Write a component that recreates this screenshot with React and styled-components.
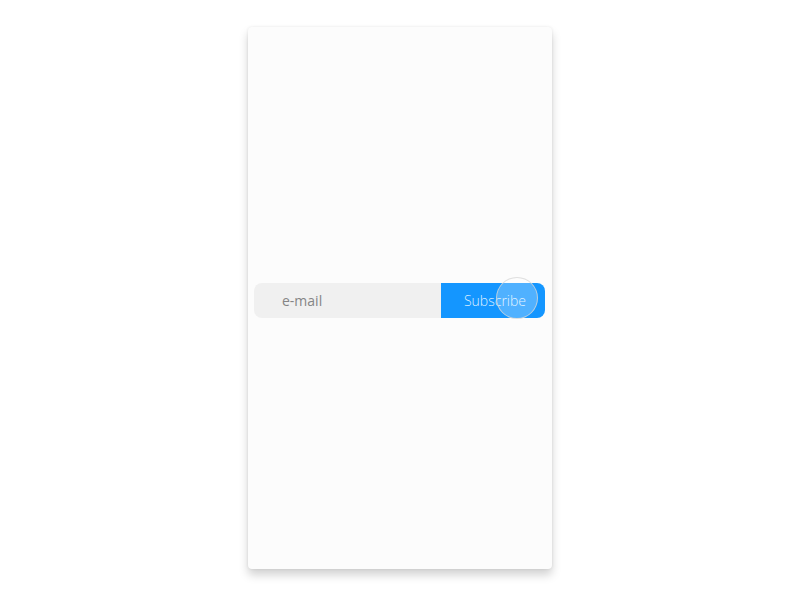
import React from "react";
import styled, { createGlobalStyle } from "styled-components";

const GlobalStyle = createGlobalStyle`
  html, body {
    margin: 0;
    padding: 0;
    background: #ffffff;
    font-family: "Open Sans", "Noto Sans", sans-serif;
  }
`;

const Page = styled.div`
  width: 800px;
  height: 600px;
  display: flex;
  justify-content: center;
  align-items: flex-start;
  padding-top: 27px;
  box-sizing: border-box;
`;

const Card = styled.div`
  width: 304px;
  height: 542px;
  background: #fcfcfc;
  border-radius: 4px;
  box-shadow: 0 6px 10px rgba(0, 0, 0, 0.18), 0 0 3px rgba(0, 0, 0, 0.08);
  display: flex;
  align-items: center;
  padding: 4px 7px 0 6px;
  box-sizing: border-box;
`;

const Form = styled.form`
  display: flex;
  width: 100%;
  height: 35px;
  margin: 0;
`;

const Email = styled.input`
  flex: 1;
  min-width: 0;
  border: none;
  outline: none;
  background: #f0f0f0;
  border-radius: 8px 0 0 8px;
  padding: 0 0 0 28px;
  font-family: "Open Sans", sans-serif;
  font-size: 14px;
  font-weight: 400;
  color: #777;
  &::placeholder {
    color: #858585;
  }
`;

const Button = styled.button`
  position: relative;
  width: 104px;
  border: none;
  background: #1496ff;
  border-radius: 0 8px 8px 0;
  color: #dcefff;
  font-family: "Open Sans", sans-serif;
  font-size: 14px;
  font-weight: 300;
  padding: 0 0 0 4px;
  cursor: pointer;
`;

const Ripple = styled.span`
  position: absolute;
  left: 55px;
  top: -6px;
  width: 42px;
  height: 42px;
  border-radius: 50%;
  background: rgba(255, 255, 255, 0.26);
  border: 1px solid rgba(215, 215, 215, 0.8);
  box-sizing: border-box;
`;

export default function App() {
  return (
    <>
      <GlobalStyle />
      <Page>
        <Card>
          <Form onSubmit={(e) => e.preventDefault()}>
            <Email type="email" placeholder="e-mail" />
            <Button type="submit">
              Subscribe
              <Ripple />
            </Button>
          </Form>
        </Card>
      </Page>
    </>
  );
}
